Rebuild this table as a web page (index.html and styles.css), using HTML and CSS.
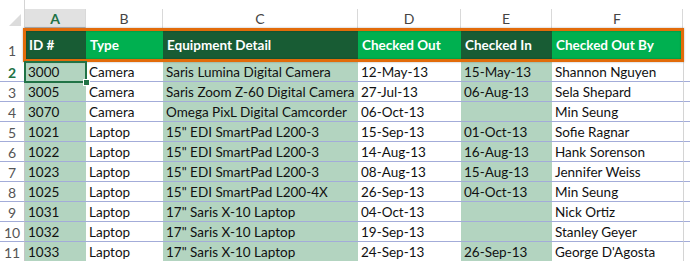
FILE: index.html
```html
<!DOCTYPE html>
<html>
<head>
<meta charset="utf-8">
<link rel="stylesheet" href="styles.css">
</head>
<body>
<div class="sheet">
  <div class="row colhdr">
    <div class="corner"><span class="tri"></span></div>
    <div class="ch sel-col">A</div>
    <div class="ch">B</div>
    <div class="ch">C</div>
    <div class="ch">D</div>
    <div class="ch">E</div>
    <div class="ch">F</div>
    <div class="ch last"></div>
  </div>
  <div class="row hdr">
    <div class="rn">1</div>
    <div class="c dk">ID #</div>
    <div class="c br">Type</div>
    <div class="c dk">Equipment Detail</div>
    <div class="c br">Checked Out</div>
    <div class="c dk">Checked In</div>
    <div class="c br">Checked Out By</div>
    <div class="c last"></div>
  </div>
  <div class="row data">
    <div class="rn sel-row">2</div>
    <div class="c lg">3000</div><div class="c">Camera</div><div class="c lg">Saris Lumina Digital Camera</div><div class="c">12-May-13</div><div class="c lg">15-May-13</div><div class="c">Shannon Nguyen</div><div class="c last"></div>
  </div>
  <div class="row data">
    <div class="rn">3</div>
    <div class="c lg">3005</div><div class="c">Camera</div><div class="c lg">Saris Zoom Z-60 Digital Camera</div><div class="c">27-Jul-13</div><div class="c lg">06-Aug-13</div><div class="c">Sela Shepard</div><div class="c last"></div>
  </div>
  <div class="row data">
    <div class="rn">4</div>
    <div class="c lg">3070</div><div class="c">Camera</div><div class="c lg">Omega PixL Digital Camcorder</div><div class="c">06-Oct-13</div><div class="c lg"></div><div class="c">Min Seung</div><div class="c last"></div>
  </div>
  <div class="row data">
    <div class="rn">5</div>
    <div class="c lg">1021</div><div class="c">Laptop</div><div class="c lg">15" EDI SmartPad L200-3</div><div class="c">15-Sep-13</div><div class="c lg">01-Oct-13</div><div class="c">Sofie Ragnar</div><div class="c last"></div>
  </div>
  <div class="row data">
    <div class="rn">6</div>
    <div class="c lg">1022</div><div class="c">Laptop</div><div class="c lg">15" EDI SmartPad L200-3</div><div class="c">14-Aug-13</div><div class="c lg">16-Aug-13</div><div class="c">Hank Sorenson</div><div class="c last"></div>
  </div>
  <div class="row data">
    <div class="rn">7</div>
    <div class="c lg">1023</div><div class="c">Laptop</div><div class="c lg">15" EDI SmartPad L200-3</div><div class="c">08-Aug-13</div><div class="c lg">15-Aug-13</div><div class="c">Jennifer Weiss</div><div class="c last"></div>
  </div>
  <div class="row data">
    <div class="rn">8</div>
    <div class="c lg">1025</div><div class="c">Laptop</div><div class="c lg">15" EDI SmartPad L200-4X</div><div class="c">26-Sep-13</div><div class="c lg">04-Oct-13</div><div class="c">Min Seung</div><div class="c last"></div>
  </div>
  <div class="row data">
    <div class="rn">9</div>
    <div class="c lg">1031</div><div class="c">Laptop</div><div class="c lg">17" Saris X-10 Laptop</div><div class="c">04-Oct-13</div><div class="c lg"></div><div class="c">Nick Ortiz</div><div class="c last"></div>
  </div>
  <div class="row data">
    <div class="rn">10</div>
    <div class="c lg">1032</div><div class="c">Laptop</div><div class="c lg">17" Saris X-10 Laptop</div><div class="c">19-Sep-13</div><div class="c lg"></div><div class="c">Stanley Geyer</div><div class="c last"></div>
  </div>
  <div class="row data">
    <div class="rn">11</div>
    <div class="c lg">1033</div><div class="c">Laptop</div><div class="c lg">17" Saris X-10 Laptop</div><div class="c">24-Sep-13</div><div class="c lg">26-Sep-13</div><div class="c">George D'Agosta</div><div class="c last"></div>
  </div>
  <div class="frame"></div>
  <div class="selbox"><span class="handle"></span></div>
</div>
</body>
</html>
```
FILE: styles.css
```css
html, body {
  margin: 0;
  padding: 0;
  background: #fff;
}
.sheet {
  position: relative;
  width: 690px;
  height: 261px;
  overflow: hidden;
  font-family: Lato, "Liberation Sans", sans-serif;
  font-size: 13.5px;
  color: #111;
}
.row {
  display: grid;
  grid-template-columns: 25px 61px 77px 195px 103px 91px 131px 1fr;
}
.colhdr {
  height: 28px;
}
.corner {
  position: relative;
  border-right: 1px solid #d4d4d4;
}
.tri {
  position: absolute;
  right: 3px;
  bottom: 2px;
  width: 0;
  height: 0;
  border-left: 12px solid transparent;
  border-bottom: 12px solid #dcdcdc;
}
.ch {
  margin-top: 9px;
  height: 19px;
  border-right: 1px solid #d9d9d9;
  display: flex;
  align-items: center;
  justify-content: center;
  color: #444;
  font-size: 14px;
}
.ch.last {
  border-right: none;
}
.sel-col {
  background: #e1e1e1;
  color: #217346;
  font-weight: bold;
  border-bottom: 1px solid #b5b5b5;
  height: 18px;
}
.hdr {
  height: 34px;
  grid-template-rows: 34px;
}
.hdr .c {
  font-weight: bold;
  font-size: 13.5px;
  color: #fff;
  line-height: 34px;
  padding-left: 4px;
  white-space: nowrap;
}
.hdr .rn {
  display: flex;
  align-items: flex-end;
  justify-content: center;
  line-height: 20px;
  padding-bottom: 1px;
}
.dk { background: #185c34; }
.br { background: #00b050; }
.hdr .last { background: #fff; border-left: 1px solid #d4d4d4; }
.rn {
  text-align: center;
  color: #555;
  font-size: 14px;
  border-right: 1px solid #c6c6c6;
  white-space: nowrap;
}
.data {
  height: 20px;
  grid-template-rows: 20px;
}
.data > div {
  border-bottom: 1px solid #a3acd9;
  line-height: 21px;
  white-space: nowrap;
  overflow: hidden;
}
.data .c {
  padding-left: 3px;
}
.data .last {
  border-left: 1px solid #d4d4d4;
}
.lg { background: #b3d4c0; }
.sel-row {
  color: #217346;
  font-weight: bold;
}
.frame {
  position: absolute;
  left: 23px;
  top: 28px;
  width: 655px;
  height: 28px;
  border: 3px solid #e26b0a;
  box-shadow: 0 0 2px rgba(0,0,0,.3), inset 0 0 2px rgba(0,0,0,.3);
}
.selbox {
  position: absolute;
  left: 24px;
  top: 61px;
  width: 59px;
  height: 18px;
  border: 2px solid #217346;
}
.handle {
  position: absolute;
  right: -5px;
  bottom: -5px;
  width: 5px;
  height: 5px;
  background: #217346;
  border: 1px solid #fff;
}
```
